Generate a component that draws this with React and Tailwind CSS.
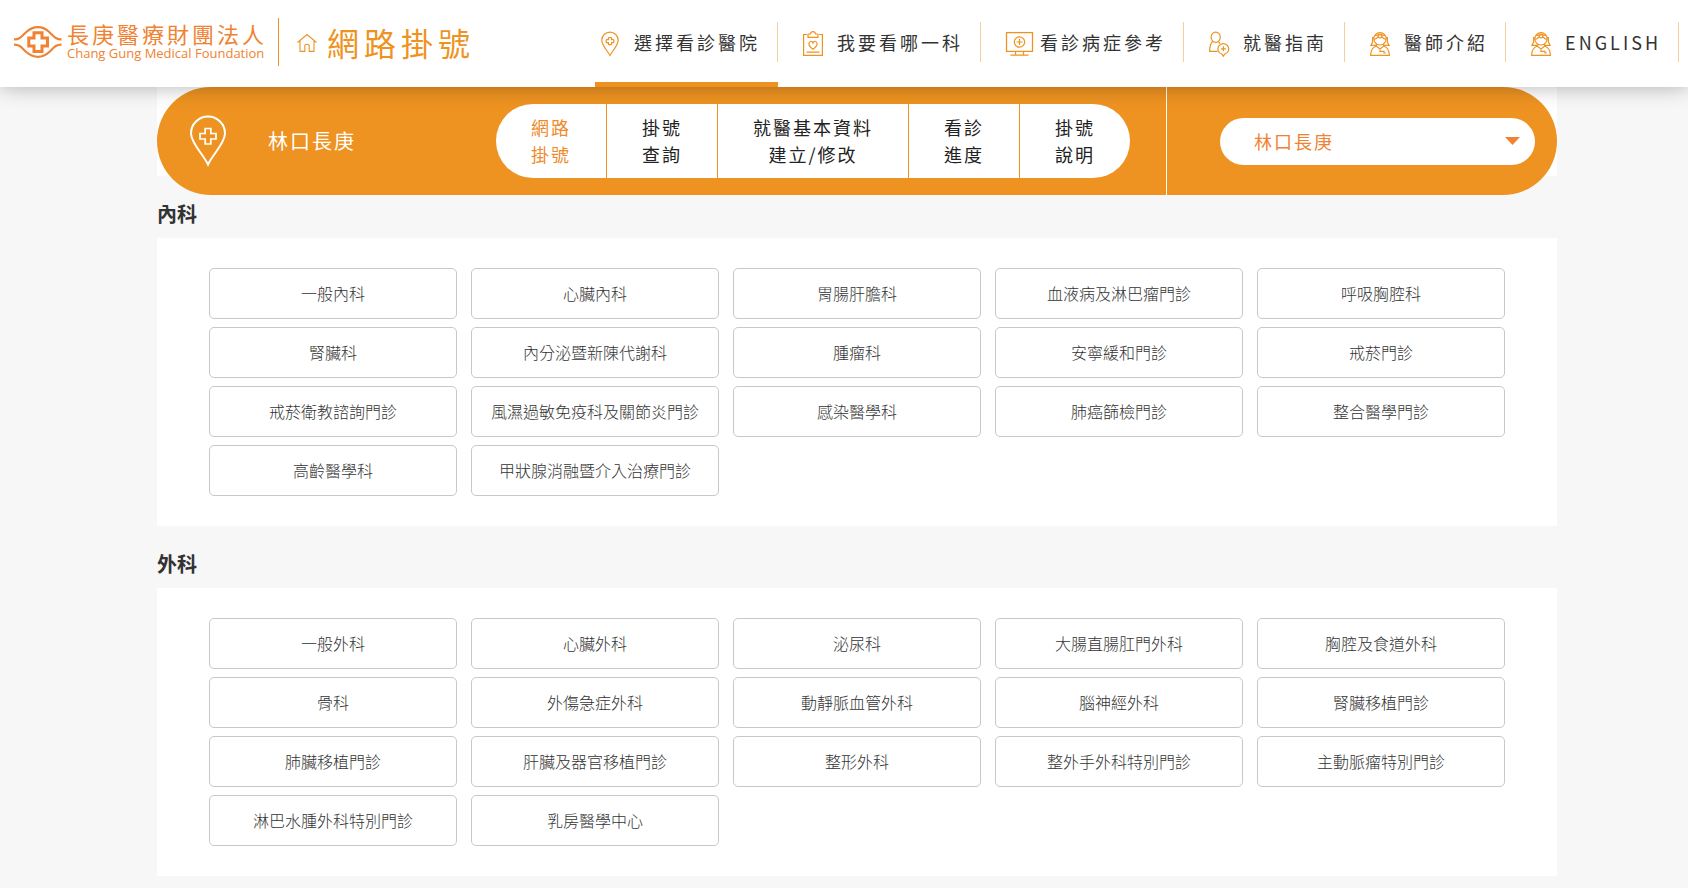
import React from "react";

const FONT = "font-['Noto_Sans_CJK_JP','Noto_Sans_CJK_TC',sans-serif]";

function Emblem() {
  return (
    <svg className="h-8 w-12 shrink-0" viewBox="0 0 48 32" fill="none" stroke="#f08232" aria-hidden="true">
      <path strokeWidth="2.1" d="M0 13.4C6 13.6 8 10 12 6.2C19.5 -.6 28.5 -.6 35.5 6.2C39.5 10 41.5 13.6 47.5 13.4" />
      <path strokeWidth="2.1" d="M0 18.6C6 18.4 8 22 12 25.8C19.5 32.6 28.5 32.6 35.5 25.8C39.5 22 41.5 18.4 47.5 18.6" />
      <path strokeWidth="3" d="M20 6.8H28V12H33.5V20H28V25.5H20V20H14.8V12H20Z" />
    </svg>
  );
}

function HomeIcon() {
  return (
    <svg className="h-5 w-5 shrink-0" viewBox="0 0 20 20" fill="none" stroke="#ee9321" strokeWidth="1.1" aria-hidden="true">
      <path d="M.5 10.5L10 2.5L19.5 10.5M3 9V19.4H7.8V13.7Q7.8 12.2 10 12.2T12.2 13.7V19.4H17V9" />
    </svg>
  );
}

function IconFrame({ children }) {
  return (
    <svg className="h-[30px] w-9 shrink-0" viewBox="0 -2 36 30" fill="none" stroke="#ee9321" strokeWidth="1.2" aria-hidden="true">
      {children}
    </svg>
  );
}

function PinIcon() {
  return (
    <IconFrame>
      <path d="M15 26.5C13 22.5 6.8 16.5 6.8 11.3A8.2 8.2 0 0 1 23.2 11.3C23.2 16.5 17 22.5 15 26.5Z" />
      <path d="M13.4 10.6V9.4Q13.4 8.7 14.1 8.7H15.9Q16.6 8.7 16.6 9.4V10.6H18Q18.8 10.6 18.8 11.3V13Q18.8 13.7 18 13.7H16.6V15Q16.6 15.7 15.9 15.7H14.1Q13.4 15.7 13.4 15V13.7H12Q11.2 13.7 11.2 13V11.3Q11.2 10.6 12 10.6Z" />
    </IconFrame>
  );
}

function ClipboardIcon() {
  return (
    <IconFrame>
      <path d="M9 5.5H5.6V26.4H24.4V5.5H21" />
      <path d="M10 8.4V5.5Q10 5 10.5 5H12.5Q12.8 2.6 15 2.6T17.5 5H19.5Q20 5 20 5.5V8.4ZM8.5 23.2H21.5" />
      <path d="M15 20.2C12.5 18.4 10.9 16.8 10.9 14.7C10.9 12.2 14.1 11.6 15 14C15.9 11.6 19.1 12.2 19.1 14.7C19.1 16.8 17.5 18.4 15 20.2Z" />
    </IconFrame>
  );
}

function MonitorIcon() {
  return (
    <IconFrame>
      <rect x="5.5" y="3.6" width="26" height="18.8" strokeWidth="1.3" />
      <circle cx="18.5" cy="13" r="5.2" />
      <path d="M18.5 10V16M15.5 13H21.5M14.5 22.5V26M22.5 22.5V26M9.5 26.2H27.5" />
    </IconFrame>
  );
}

function GuideIcon() {
  return (
    <IconFrame>
      <ellipse cx="11.7" cy="8.2" rx="4.6" ry="5.1" />
      <path d="M8.8 12.3C6.8 14 5.7 18 5.6 22.4H13.5M14.3 12.3L16 14.6" />
      <path d="M18 25.2A5.4 5.4 0 1 1 20.6 25.2L19.3 27.2Z" />
      <path d="M19.4 17.3V22.3M16.9 19.8H21.9" />
    </IconFrame>
  );
}

function DoctorIcon() {
  return (
    <IconFrame>
      <circle cx="15" cy="9.8" r="6.2" />
      <path d="M10 6.7C12 5.6 18 5.6 20 6.7M9.2 10.5C11 10 12.3 8.8 13 7.8M20.8 10.5C19 10 17.7 8.8 17 7.8" />
      <circle cx="15" cy="6.9" r="1.9" />
      <path d="M9.2 8.6H7.6V13L5.9 16.4H11.5M20.8 8.6H22.4V13L24.1 16.4H18.5" />
      <path d="M10.8 17.2C7.5 18.5 5.7 21 5.6 26.4H24.4C24.3 21 22.5 18.5 19.2 17.2M11.4 15.2V17.2L15 20L18.6 17.2V15.2M15 20V22.4H19V24H20.8" />
    </IconFrame>
  );
}

const navItems = [
  { label: "選擇看診醫院", Icon: PinIcon, active: true },
  { label: "我要看哪一科", Icon: ClipboardIcon },
  { label: "看診病症參考", Icon: MonitorIcon },
  { label: "就醫指南", Icon: GuideIcon },
  { label: "醫師介紹", Icon: DoctorIcon },
  { label: "ENGLISH", Icon: DoctorIcon },
];

function Header() {
  return (
    <header className="sticky top-0 z-10 flex h-[87px] items-stretch justify-between bg-white pr-[9px] pl-[14px] shadow-[0_0_20px_rgba(0,0,0,0.3)]">
      <div className="flex items-center pb-1">
        <a href="#" className="flex items-center gap-1 text-[#f08232]">
          <Emblem />
          <span className="flex flex-col pt-px pl-px">
            <span className="text-[22px] leading-[22px] tracking-[3px] whitespace-nowrap">長庚醫療財團法人</span>
            <span className="font-['Open_Sans',sans-serif] text-[13px] leading-[18px] font-medium whitespace-nowrap">
              Chang Gung Medical Foundation
            </span>
          </span>
        </a>
        <a href="#" className="ml-[11px] flex h-12 items-center gap-[10px] border-l border-[#ee9321] pl-[18px] text-[#ee9321]">
          <HomeIcon />
          <span className="text-[32px] leading-10 tracking-[5px] whitespace-nowrap">網路掛號</span>
        </a>
      </div>
      <nav className="flex">
        {navItems.map(({ label, Icon, active }) => (
          <a
            key={label}
            href="#"
            className={
              active
                ? "flex items-center border-b-[5px] border-[#ee9321] pt-[2px]"
                : "flex items-center pb-[3px] pl-5"
            }
          >
            <span className="flex h-10 items-center gap-[3px] border-r border-[#f6cf9f] pr-[17px] text-lg tracking-[3px] whitespace-nowrap text-[#333]">
              <Icon />
              {label}
            </span>
          </a>
        ))}
      </nav>
    </header>
  );
}

const tabs = [
  ["網路", "掛號"],
  ["掛號", "查詢"],
  ["就醫基本資料", "建立/修改"],
  ["看診", "進度"],
  ["掛號", "說明"],
];

function HospitalBar() {
  return (
    <div className="h-[89px] bg-white">
      <div className="flex h-[108px] items-stretch rounded-full bg-[#ee9321] tracking-[2px]">
        <div className="flex flex-1 items-center justify-between pr-9 pl-8">
          <div className="flex items-center gap-[41px] text-xl text-white">
            <svg className="h-[52px] w-[38px]" viewBox="0 1 38 52" fill="none" stroke="#fff" strokeWidth="2" aria-hidden="true">
              <path d="M19 50.5C14 40 2 29 2 19.5A17 17 0 0 1 36 19.5C36 29 24 40 19 50.5Z" />
              <path strokeWidth="1.7" d="M16.2 14.5H21.8V19.5H27V25H21.8V30H16.2V25H11V19.5H16.2Z" />
            </svg>
            <span>林口長庚</span>
          </div>
          <nav className="flex divide-x divide-[#ee9321] overflow-hidden rounded-full bg-white">
            {tabs.map(([first, second], i) => (
              <a
                key={first + second}
                href="#"
                className={
                  "px-[35px] py-[10px] text-center text-lg leading-[27px] whitespace-nowrap " +
                  (i === 0 ? "text-[#ee8a2c]" : "text-[#222]")
                }
              >
                {first}
                <br />
                {second}
              </a>
            ))}
          </nav>
        </div>
        <div className="flex items-center border-l border-white pr-[22px] pl-[53px]">
          <div className="relative">
            <select
              aria-label="院區"
              className="h-[47px] w-[315px] appearance-none rounded-full bg-white pr-12 pl-[34px] text-lg tracking-[2px] text-[#f08232] outline-none"
            >
              <option>林口長庚</option>
            </select>
            <svg className="pointer-events-none absolute top-[19px] right-[15px] h-2 w-[15px]" viewBox="0 0 15 8" aria-hidden="true">
              <path fill="#f08232" d="M0 0H15L7.5 8Z" />
            </svg>
          </div>
        </div>
      </div>
    </div>
  );
}

const sections = [
  {
    title: "內科",
    items: [
      "一般內科", "心臟內科", "胃腸肝膽科", "血液病及淋巴瘤門診", "呼吸胸腔科",
      "腎臟科", "內分泌暨新陳代謝科", "腫瘤科", "安寧緩和門診", "戒菸門診",
      "戒菸衛教諮詢門診", "風濕過敏免疫科及關節炎門診", "感染醫學科", "肺癌篩檢門診", "整合醫學門診",
      "高齡醫學科", "甲狀腺消融暨介入治療門診",
    ],
  },
  {
    title: "外科",
    items: [
      "一般外科", "心臟外科", "泌尿科", "大腸直腸肛門外科", "胸腔及食道外科",
      "骨科", "外傷急症外科", "動靜脈血管外科", "腦神經外科", "腎臟移植門診",
      "肺臟移植門診", "肝臟及器官移植門診", "整形外科", "整外手外科特別門診", "主動脈瘤特別門診",
      "淋巴水腫外科特別門診", "乳房醫學中心",
    ],
  },
];

function Department({ title, items }) {
  return (
    <section>
      <h2 className="pt-[23px] pb-[9px] text-xl leading-[30px] font-bold text-[#333]">{title}</h2>
      <ul className="grid grid-cols-5 gap-x-[14px] gap-y-2 bg-white px-[52px] py-[30px]">
        {items.map((name) => (
          <li key={name}>
            <a
              href="#"
              className="flex h-[51px] items-center justify-center rounded-[5px] border border-[#c8c8c8] pb-[2px] text-base font-light text-[#333]"
            >
              {name}
            </a>
          </li>
        ))}
      </ul>
    </section>
  );
}

export default function App() {
  return (
    <div lang="zh-Hant" className={"min-h-screen bg-[#f7f7f7] pb-3 " + FONT}>
      <Header />
      <main className="pl-[26px]">
        <div className="mx-auto max-w-[1400px]">
          <HospitalBar />
          {sections.map((s) => (
            <Department key={s.title} {...s} />
          ))}
        </div>
      </main>
    </div>
  );
}
